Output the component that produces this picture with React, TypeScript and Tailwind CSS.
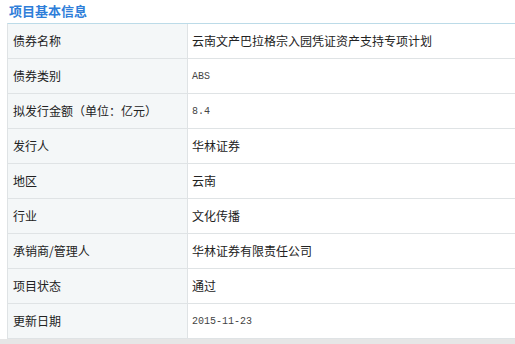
const rows: { label: string; value: string; mono?: boolean }[] = [
  { label: "债券名称", value: "云南文产巴拉格宗入园凭证资产支持专项计划" },
  { label: "债券类别", value: "ABS", mono: true },
  { label: "拟发行金额（单位：亿元）", value: "8.4", mono: true },
  { label: "发行人", value: "华林证券" },
  { label: "地区", value: "云南" },
  { label: "行业", value: "文化传播" },
  { label: "承销商/管理人", value: "华林证券有限责任公司" },
  { label: "项目状态", value: "通过" },
  { label: "更新日期", value: "2015-11-23", mono: true },
];

export default function App() {
  return (
    <div className="w-[515px] h-[344px] overflow-hidden bg-white font-['Noto_Sans_CJK_SC',sans-serif]">
      {/* TITLE */}
      <div className="h-[23px] pl-[9px] pt-[1px] text-[13px] font-bold leading-[20px] text-[#2e7ed9]">
        项目基本信息
      </div>

      {/* TABLE */}
      <div className="ml-[7px] border-t border-[#bcdbe8] border-l border-l-[#dfe3e5]">
        {rows.map((r) => (
          <div key={r.label} className="grid grid-cols-[180px_1fr] h-[35px] border-b border-[#dfe3e5]">
            <div className="flex items-center pl-[5px] bg-[#f4f7f8] border-r border-[#dfe3e5] text-[12px] text-[#222]">
              {r.label}
            </div>
            <div
              className={
                r.mono
                  ? "flex items-center pl-[4px] text-[10px] text-[#444] font-['Liberation_Mono',monospace]"
                  : "flex items-center pl-[4px] text-[12px] text-[#222]"
              }
            >
              {r.value}
            </div>
          </div>
        ))}
      </div>

      <div className="h-[6px] bg-[#e6e6e6]" />
    </div>
  );
}
